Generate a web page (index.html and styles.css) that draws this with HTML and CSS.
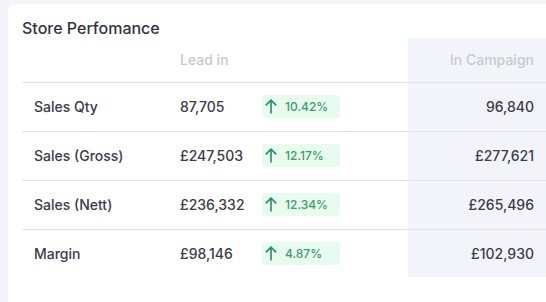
FILE: index.html
```html
<!DOCTYPE html>
<html>
<head>
<meta charset="utf-8">
<link rel="stylesheet" href="styles.css">
</head>
<body>
<div class="card">
  <h2 class="title">Store Perfomance</h2>
  <table class="perf">
    <colgroup>
      <col class="w-label">
      <col class="w-lead">
      <col class="w-badge">
      <col class="w-camp">
    </colgroup>
    <thead>
      <tr>
        <th></th>
        <th>Lead in</th>
        <th></th>
        <th class="c-camp">In Campaign</th>
      </tr>
    </thead>
    <tbody>
      <tr>
        <td>Sales Qty</td>
        <td>87,705</td>
        <td><span class="badge"><svg class="arrow" viewBox="0 0 12 15" width="12" height="15"><path d="M6 14.5V1.2M0.8 6.4L6 1.2L11.2 6.4" fill="none" stroke="currentColor" stroke-width="1.6"/></svg>10.42%</span></td>
        <td class="c-camp">96,840</td>
      </tr>
      <tr>
        <td>Sales (Gross)</td>
        <td>£247,503</td>
        <td><span class="badge"><svg class="arrow" viewBox="0 0 12 15" width="12" height="15"><path d="M6 14.5V1.2M0.8 6.4L6 1.2L11.2 6.4" fill="none" stroke="currentColor" stroke-width="1.6"/></svg>12.17%</span></td>
        <td class="c-camp">£277,621</td>
      </tr>
      <tr>
        <td>Sales (Nett)</td>
        <td>£236,332</td>
        <td><span class="badge"><svg class="arrow" viewBox="0 0 12 15" width="12" height="15"><path d="M6 14.5V1.2M0.8 6.4L6 1.2L11.2 6.4" fill="none" stroke="currentColor" stroke-width="1.6"/></svg>12.34%</span></td>
        <td class="c-camp">£265,496</td>
      </tr>
      <tr>
        <td>Margin</td>
        <td>£98,146</td>
        <td><span class="badge"><svg class="arrow" viewBox="0 0 12 15" width="12" height="15"><path d="M6 14.5V1.2M0.8 6.4L6 1.2L11.2 6.4" fill="none" stroke="currentColor" stroke-width="1.6"/></svg>4.87%</span></td>
        <td class="c-camp">£102,930</td>
      </tr>
    </tbody>
  </table>
</div>
</body>
</html>
```
FILE: styles.css
```css
html, body {
  margin: 0;
  padding: 0;
}
body {
  background: #f4f5fa;
  font-family: Inter, "Noto Sans", sans-serif;
  color: #3b3b4a;
  overflow: hidden;
  height: 302px;
}
.card {
  margin: 4px 0 0 8px;
  background: #ffffff;
  border-radius: 6px 0 0 0;
  padding: 14px 0 0 14px;
  height: 298px;
  box-sizing: border-box;
}
.title {
  margin: 0;
  font-size: 16px;
  font-weight: 500;
  line-height: 20px;
  color: #34343f;
}
.perf {
  border-collapse: collapse;
  table-layout: fixed;
  width: 524px;
  font-size: 14px;
}
.w-label { width: 146px; }
.w-lead { width: 82px; }
.w-badge { width: 158px; }
.w-camp { width: 138px; }
.perf th {
  height: 44px;
  padding: 0 12px;
  font-weight: 500;
  color: #c9c9cc;
  text-align: left;
  border-bottom: 1px solid #e1e1e6;
  box-sizing: border-box;
  white-space: nowrap;
}
.perf td {
  height: 49px;
  padding: 0 12px;
  font-weight: 500;
  border-bottom: 1px solid #e1e1e6;
  box-sizing: border-box;
  white-space: nowrap;
}
.perf tbody tr:last-child td {
  border-bottom: none;
  height: 48px;
}
.perf .c-camp {
  text-align: right;
  background: #f3f4f9;
}
.badge {
  display: inline-flex;
  align-items: center;
  gap: 8px;
  width: 78px;
  height: 23px;
  padding-left: 3px;
  box-sizing: border-box;
  background: #e7fbef;
  border-radius: 4px;
  color: #3f9a6c;
  font-size: 12px;
  font-weight: 500;
  vertical-align: middle;
}
.arrow {
  color: #2c8a6a;
  display: block;
}
```
